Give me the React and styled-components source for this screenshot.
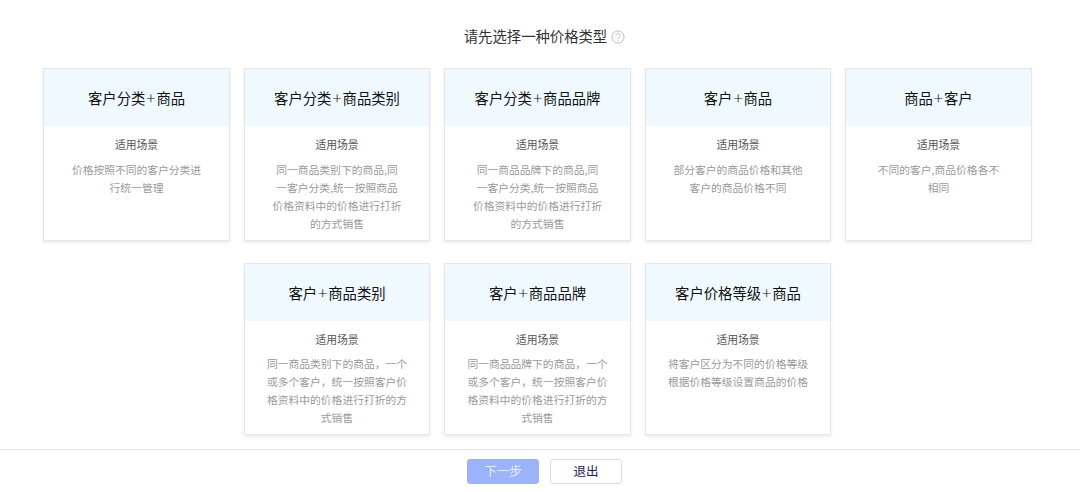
import React from "react";
import styled, { createGlobalStyle } from "styled-components";

const ROWS = [
  [
    {
      title: ["客户分类", "商品"],
      desc: "价格按照不同的客户分类进\n行统一管理"
    },
    {
      title: ["客户分类", "商品类别"],
      desc:
        "同一商品类别下的商品,同\n一客户分类,统一按照商品\n价格资料中的价格进行打折\n的方式销售"
    },
    {
      title: ["客户分类", "商品品牌"],
      desc:
        "同一商品品牌下的商品,同\n一客户分类,统一按照商品\n价格资料中的价格进行打折\n的方式销售"
    },
    {
      title: ["客户", "商品"],
      desc: "部分客户的商品价格和其他\n客户的商品价格不同"
    },
    {
      title: ["商品", "客户"],
      desc: "不同的客户,商品价格各不\n相同"
    }
  ],
  [
    {
      title: ["客户", "商品类别"],
      desc:
        "同一商品类别下的商品，一个\n或多个客户，统一按照客户价\n格资料中的价格进行打折的方\n式销售"
    },
    {
      title: ["客户", "商品品牌"],
      desc:
        "同一商品品牌下的商品，一个\n或多个客户，统一按照客户价\n格资料中的价格进行打折的方\n式销售"
    },
    {
      title: ["客户价格等级", "商品"],
      desc: "将客户区分为不同的价格等级\n根据价格等级设置商品的价格"
    }
  ]
];

const App = () => {
  return (
    <React.Fragment>
      <GlobalStyle />
      <Page>
        <Heading>
          请先选择一种价格类型
          <HelpIcon />
        </Heading>
        <CardRows>
          {ROWS.map((row, i) => (
            <CardRow key={i}>
              {row.map(item => (
                <PriceTypeCard key={item.title.join("+")} {...item} />
              ))}
            </CardRow>
          ))}
        </CardRows>
        <Footer>
          <Button $primary disabled>
            下一步
          </Button>
          <Button>退出</Button>
        </Footer>
      </Page>
    </React.Fragment>
  );
};

const PriceTypeCard = ({ title, desc }) => (
  <Card>
    <CardTitle>
      {title[0]}
      <Plus>+</Plus>
      {title[1]}
    </CardTitle>
    <CardBody>
      <SceneLabel>适用场景</SceneLabel>
      <SceneDesc>{desc}</SceneDesc>
    </CardBody>
  </Card>
);

const HelpIcon = () => (
  <HelpSvg viewBox="0 0 14 14" fill="none" stroke="#bdbdbd">
    <circle cx="7" cy="7" r="6.1" />
    <path d="M4.9 5.6c0-1.3.9-2.1 2.1-2.1s2.1.8 2.1 1.9c0 1.6-2.1 1.6-2.1 3.3" />
    <path d="M7 9.7v1.2" />
  </HelpSvg>
);

const GlobalStyle = createGlobalStyle`
  * {
    box-sizing: border-box;
  }
  body {
    margin: 0;
    background: #fff;
    font-family: "Noto Sans CJK SC", sans-serif;
  }
`;
const Page = styled.div`
  height: 492px;
  display: flex;
  flex-direction: column;
  overflow: hidden;
`;
const Heading = styled.div`
  display: flex;
  justify-content: center;
  height: 20px;
  margin-top: 27px;
  padding-left: 9px;
  line-height: 18px;
  font-size: 14.35px;
  color: #333;
`;
const HelpSvg = styled.svg`
  width: 14px;
  height: 14px;
  margin: 3px 0 0 4px;
`;
const CardRows = styled.div`
  display: flex;
  flex-direction: column;
  gap: 22px;
  margin-top: 21px;
  padding-right: 5px;
`;
const CardRow = styled.div`
  display: flex;
  justify-content: center;
  gap: 13.9px;
`;
const Card = styled.div`
  width: 186.6px;
  height: 172.5px;
  border: 1px solid #e6e6e6;
  box-shadow: 0 2px 3px rgba(0, 0, 0, 0.08);
  text-align: center;
`;
const CardTitle = styled.div`
  height: 57px;
  line-height: 58px;
  background: #f0f9ff;
  font-size: 14.35px;
  color: #111;
`;
const Plus = styled.span`
  margin: 0 0.7px;
  font-family: "Open Sans", sans-serif;
  font-size: 17px;
  font-weight: 300;
`;
const CardBody = styled.div`
  padding-top: 9px;
`;
const SceneLabel = styled.div`
  line-height: 18px;
  font-size: 10.8px;
  color: #555;
`;
const SceneDesc = styled.div`
  margin-top: 7.7px;
  line-height: 18px;
  font-size: 10.77px;
  color: #999;
  white-space: pre;
`;
const Footer = styled.div`
  display: flex;
  justify-content: center;
  gap: 11px;
  height: 43px;
  margin-top: auto;
  padding: 9px 0 0 9px;
  border-top: 1px solid #e6e6e6;
`;
const Button = styled.button`
  width: 72px;
  height: 25px;
  padding: 0 0 1px;
  border: 1px solid ${props => (props.$primary ? "#9ab3fa" : "#d9d9ea")};
  border-radius: 3px;
  background: ${props => (props.$primary ? "#9ab3fa" : "#fff")};
  color: ${props => (props.$primary ? "#e6ecfe" : "#222244")};
  font-family: inherit;
  font-size: 12.5px;
  line-height: 22px;
`;

export default App;
